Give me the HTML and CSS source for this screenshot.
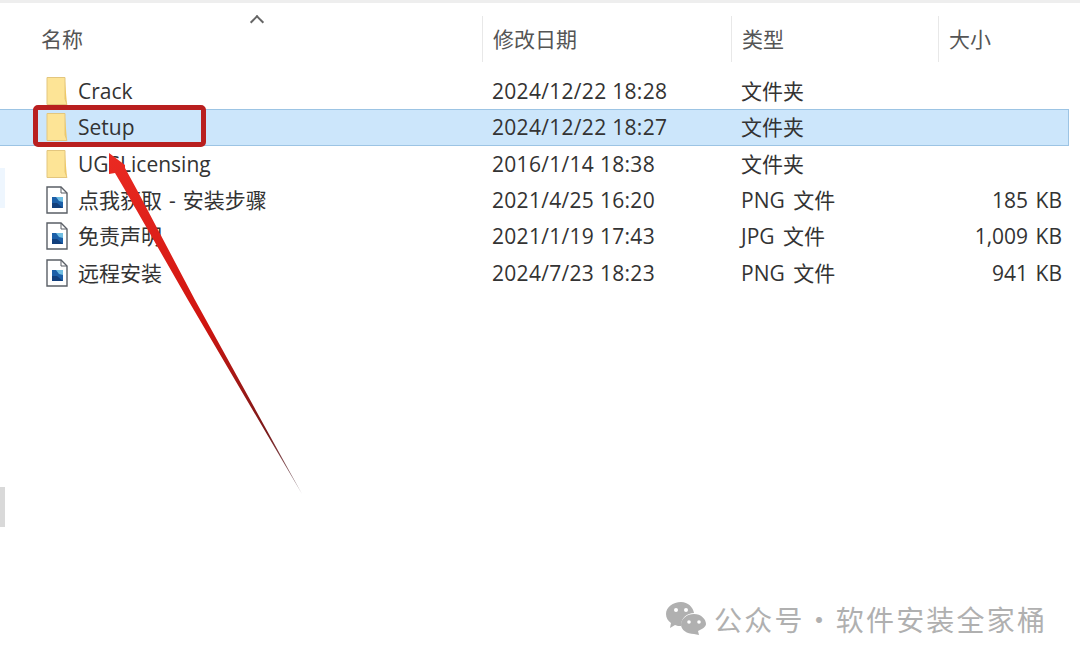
FILE: index.html
```html
<!DOCTYPE html>
<html>
<head>
    <title>文件夹</title>
    <link rel="stylesheet" href="styles.css">
</head>
<body>
    <svg width="0" height="0" class="defs">
        <symbol id="folder" viewBox="0 0 22 28">
            <path d="M1 .5H19V22L21 27.5H1Z" fill="#fde496" stroke="#e3c67e"/>
            <path d="M19 4L21 27.5L19 22Z" fill="#f0c965"/>
        </symbol>
        <symbol id="picture" viewBox="0 0 22 28">
            <path d="M1 1H15L21 7V27H1Z" fill="#fff" stroke="#5a5f66" stroke-width="1.4"/>
            <path d="M15 1V7H21" fill="none" stroke="#5a5f66"/>
            <rect x="6" y="11" width="11" height="11" fill="#1c5fa8"/>
            <path d="M10 11H17V16L13 15Z" fill="#6fbde2"/>
            <path d="M6 22V17L11 17L17 22Z" fill="#123f7c"/>
        </symbol>
        <linearGradient id="arrow-fade" gradientUnits="userSpaceOnUse" x1="109" y1="153" x2="302" y2="494">
            <stop offset="0" stop-color="#ea2a22"/>
            <stop offset="0.5" stop-color="#d01510"/>
            <stop offset="0.82" stop-color="#7a1a1a"/>
            <stop offset="1" stop-color="#8a8088"/>
        </linearGradient>
    </svg>

    <div id="explorer">
        <div class="header-row">
            <div class="col-name">名称<span class="sort-arrow"></span></div>
            <div class="col-date">修改日期</div>
            <div class="col-type">类型</div>
            <div class="col-size">大小</div>
        </div>

        <ul id="file-list">
            <li class="file-row">
                <span class="col-name"><svg class="file-icon"><use href="#folder"/></svg>Crack</span>
                <span class="col-date">2024/12/22 18:28</span>
                <span class="col-type">文件夹</span>
                <span class="col-size"></span>
            </li>
            <li class="file-row selected">
                <span class="col-name"><svg class="file-icon"><use href="#folder"/></svg>Setup</span>
                <span class="col-date">2024/12/22 18:27</span>
                <span class="col-type">文件夹</span>
                <span class="col-size"></span>
            </li>
            <li class="file-row">
                <span class="col-name"><svg class="file-icon"><use href="#folder"/></svg>UGSLicensing</span>
                <span class="col-date">2016/1/14 18:38</span>
                <span class="col-type">文件夹</span>
                <span class="col-size"></span>
            </li>
            <li class="file-row">
                <span class="col-name"><svg class="file-icon"><use href="#picture"/></svg>点我获取 - 安装步骤</span>
                <span class="col-date">2021/4/25 16:20</span>
                <span class="col-type">PNG 文件</span>
                <span class="col-size">185 KB</span>
            </li>
            <li class="file-row">
                <span class="col-name"><svg class="file-icon"><use href="#picture"/></svg>免责声明</span>
                <span class="col-date">2021/1/19 17:43</span>
                <span class="col-type">JPG 文件</span>
                <span class="col-size">1,009 KB</span>
            </li>
            <li class="file-row">
                <span class="col-name"><svg class="file-icon"><use href="#picture"/></svg>远程安装</span>
                <span class="col-date">2024/7/23 18:23</span>
                <span class="col-type">PNG 文件</span>
                <span class="col-size">941 KB</span>
            </li>
        </ul>
    </div>

    <div class="watermark">
        <svg class="wechat-icon" viewBox="0 0 40 33">
            <path d="M15 0C7 0 0 5 0 12C0 16 2 19 5 21L4 26L9 23C11 24 13 24 15 24C15 16 21 11 28 11C27 5 22 0 15 0Z" fill="#b0b0b0"/>
            <path d="M28 12C21 12 15 17 15 22.500C15 28 21 32 28 32L33 33L32 29C36 27 40 25 40 22C40 17 35 12 28 12Z" fill="#b0b0b0"/>
            <circle cx="10" cy="8" r="2" fill="#fff"/>
            <circle cx="20" cy="8" r="2" fill="#fff"/>
            <circle cx="23" cy="20" r="1.800" fill="#fff"/>
            <circle cx="33" cy="20" r="1.800" fill="#fff"/>
        </svg>
        <span>公众号 · 软件安装全家桶</span>
    </div>

    <!-- leftovers of the nav pane at the cropped edge -->
    <div class="edge-stub blue"></div>
    <div class="edge-stub grey"></div>

    <!-- red annotation -->
    <div class="red-box"></div>
    <svg class="red-arrow" viewBox="0 0 1080 665">
        <path d="M109 153L125 165L125 168L137 190L195 300L302 494L188 300L125 190L115 173L109 174Z" fill="url(#arrow-fade)"/>
    </svg>
</body>
</html>
```

FILE: styles.css
```css
* {
    box-sizing: border-box;
}

html, body {
    height: 100%;
}

body {
    margin: 0;
    position: relative;
    display: flex;
    flex-direction: column;
    overflow: hidden;
    background-color: #fff;
    color: #333;
    font-family: "Open Sans", "Noto Sans CJK SC", sans-serif;
    font-size: 21px;
    line-height: 28px;
}

.defs {
    position: absolute;
}

#explorer {
    border-top: 3px solid #eeeeee;
}

.header-row,
.file-row {
    display: grid;
    grid-template-columns: 482px 249px 207px 132px;
    align-items: center;
}

.header-row {
    height: 46px;
    margin-top: 13px;
    margin-bottom: 11px;
    color: #555;
}

.header-row > div {
    height: 46px;
    display: flex;
    align-items: center;
    padding-left: 10px;
    border-left: 1px solid #e8e8e8;
    position: relative;
}

.header-row .col-name {
    padding-left: 41px;
    border-left: none;
}

.sort-arrow {
    position: absolute;
    left: 252px;
    top: 1px;
    width: 10px;
    height: 10px;
    border-top: 2px solid #666;
    border-left: 2px solid #666;
    transform: rotate(45deg);
}

#file-list {
    list-style: none;
    margin: 0;
    padding: 0;
    width: 1069px;
}

.file-row {
    height: 36.3px;
    border: 1px solid transparent;
    border-left: none;
}

.file-row.selected {
    background-color: #cce6fb;
    border-color: #9cc4e4;
}

.file-row .col-name {
    display: flex;
    align-items: center;
    padding-left: 46px;
    white-space: pre;
    word-spacing: 1.5px;
}

.file-row .col-date,
.file-row .col-type {
    padding-left: 10px;
    white-space: nowrap;
}

.file-row .col-date {
    letter-spacing: 0.3px;
}

.file-row .col-type {
    word-spacing: 3px;
}

.file-row .col-size {
    text-align: right;
    padding-right: 8px;
    white-space: nowrap;
    word-spacing: 2px;
}

.file-icon {
    width: 22px;
    height: 28px;
    margin-right: 10px;
    flex: none;
}

.watermark {
    margin-top: auto;
    margin-bottom: 30px;
    margin-left: 666px;
    display: flex;
    align-items: center;
    color: #b0b0b0;
    font-family: "Noto Sans CJK SC", sans-serif;
    font-size: 28px;
    letter-spacing: 2.2px;
    word-spacing: -8px;
    white-space: nowrap;
}

.wechat-icon {
    width: 40px;
    height: 33px;
    margin-right: 8px;
}

.edge-stub {
    position: absolute;
    left: 0;
    width: 5px;
}

.edge-stub.blue {
    top: 168px;
    height: 40px;
    background-color: #eef6fe;
}

.edge-stub.grey {
    top: 487px;
    height: 40px;
    background-color: #d9d9d9;
}

.red-box {
    position: absolute;
    left: 33px;
    top: 105px;
    width: 173px;
    height: 42px;
    border: 5px solid #b91f1f;
    border-radius: 5px;
}

.red-arrow {
    position: absolute;
    left: 0;
    top: 0;
    width: 1080px;
    height: 665px;
}
```
